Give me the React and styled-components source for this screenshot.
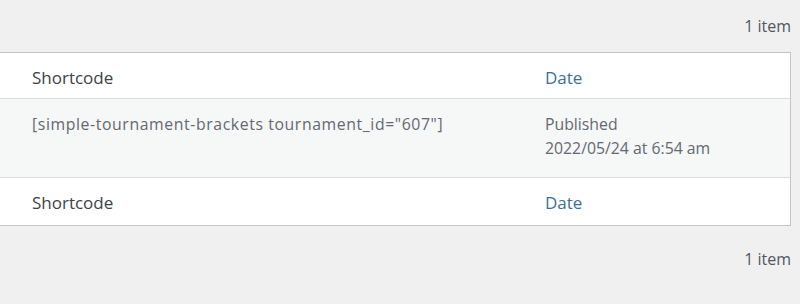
import React from "react"
import styled, { createGlobalStyle } from "styled-components"

const GlobalStyle = createGlobalStyle`
  html, body {
    margin: 0;
    padding: 0;
    background: #f0f0f1;
  }
  body {
    font-family: "Open Sans", "Noto Sans", sans-serif;
    color: #50575e;
  }
`

const Page = styled.div`
  width: 800px;
  height: 304px;
  overflow: hidden;
  background: #f0f0f1;
`

const Nav = styled.div`
  display: flex;
  justify-content: flex-end;
  align-items: center;
  height: ${(p) => p.h}px;
  padding-right: 9px;
  font-size: 16px;
  color: #50575e;
`

const Table = styled.div`
  margin-left: -1px;
  width: 792px;
  border: 1px solid #c3c4c7;
  background: #fff;
  box-sizing: border-box;
`

const Row = styled.div`
  display: grid;
  grid-template-columns: 545px 1fr;
  align-items: ${(p) => (p.body ? "start" : "center")};
  height: ${(p) => p.h}px;
  box-sizing: border-box;
  background: ${(p) => (p.body ? "#f6f7f7" : "#fff")};
  border-bottom: ${(p) => (p.sep ? "1px solid #dcdcde" : "none")};
  padding-top: ${(p) => p.pt}px;
`

const Cell = styled.div`
  padding-left: ${(p) => (p.first ? "32px" : "0")};
  font-size: ${(p) => (p.head ? "17px" : "15.8px")};
  line-height: 24px;
  letter-spacing: ${(p) => (p.code ? "0.6px" : "0")};
  color: ${(p) => (p.link ? "#3a6f9c" : p.head ? "#3c434a" : "#646970")};
`

const Line = styled.div`
  white-space: nowrap;
`

export default function App() {
  return (
    <Page>
      <GlobalStyle />
      <Nav h={52}>1 item</Nav>
      <Table>
        <Row h={46} pt={4} sep>
          <Cell first head>Shortcode</Cell>
          <Cell head link>Date</Cell>
        </Row>
        <Row h={79} pt={13} sep body>
          <Cell first code>
            <Line>[simple-tournament-brackets tournament_id="607"]</Line>
          </Cell>
          <Cell>
            <Line>Published</Line>
            <Line>2022/05/24 at 6:54 am</Line>
          </Cell>
        </Row>
        <Row h={47} pt={2}>
          <Cell first head>Shortcode</Cell>
          <Cell head link>Date</Cell>
        </Row>
      </Table>
      <Nav h={66}>1 item</Nav>
    </Page>
  )
}
